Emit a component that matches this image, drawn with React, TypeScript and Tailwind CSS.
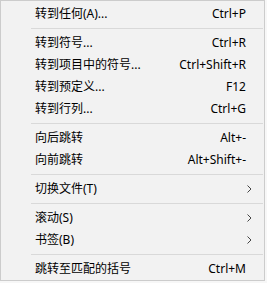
import { Fragment } from 'react';

type Item =
  | { type: 'sep' }
  | { type: 'item'; label: string; shortcut?: string; submenu?: boolean };

const items: Item[] = [
  { type: 'item', label: '转到任何(A)...', shortcut: 'Ctrl+P' },
  { type: 'sep' },
  { type: 'item', label: '转到符号...', shortcut: 'Ctrl+R' },
  { type: 'item', label: '转到项目中的符号...', shortcut: 'Ctrl+Shift+R' },
  { type: 'item', label: '转到预定义...', shortcut: 'F12' },
  { type: 'item', label: '转到行列...', shortcut: 'Ctrl+G' },
  { type: 'sep' },
  { type: 'item', label: '向后跳转', shortcut: 'Alt+-' },
  { type: 'item', label: '向前跳转', shortcut: 'Alt+Shift+-' },
  { type: 'sep' },
  { type: 'item', label: '切换文件(T)', submenu: true },
  { type: 'sep' },
  { type: 'item', label: '滚动(S)', submenu: true },
  { type: 'item', label: '书签(B)', submenu: true },
  { type: 'sep' },
  { type: 'item', label: '跳转至匹配的括号', shortcut: 'Ctrl+M' },
];

function Chevron() {
  return (
    <svg width="5" height="8" viewBox="0 0 5 8" className="block">
      <path d="M0.5 0.5 L4 4 L0.5 7.5" fill="none" stroke="#444" strokeWidth="1" />
    </svg>
  );
}

export default function App() {
  return (
    <div className="w-[267px] h-[283px] bg-[#f7f7f7]">
      <div
        className="w-[265px] h-[281px] bg-[#f2f2f2] border border-[#cccccc] pt-[2px] text-[12px] leading-none text-black"
        style={{ fontFamily: '"Noto Sans", "Noto Sans CJK SC", sans-serif' }}
      >
        {items.map((it, i) => (
          <Fragment key={i}>
            {it.type === 'sep' ? (
              <div className="h-[7px] flex items-center pl-[30px] pr-[1px]">
                <div className="h-px w-full bg-[#d9d9d9]" />
              </div>
            ) : (
              <div className="h-[22px] flex items-center pl-[34px] pr-[18px]">
                <span className="flex-1">{it.label}</span>
                {it.shortcut && <span>{it.shortcut}</span>}
                {it.submenu && (
                  <span className="mr-[-6px]">
                    <Chevron />
                  </span>
                )}
              </div>
            )}
          </Fragment>
        ))}
      </div>
    </div>
  );
}
